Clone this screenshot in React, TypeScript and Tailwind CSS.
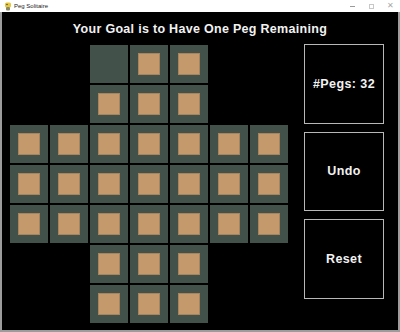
import React from "react";

const layout: number[][] = [
  [0, 0, 2, 1, 1, 0, 0],
  [0, 0, 1, 1, 1, 0, 0],
  [1, 1, 1, 1, 1, 1, 1],
  [1, 1, 1, 1, 1, 1, 1],
  [1, 1, 1, 1, 1, 1, 1],
  [0, 0, 1, 1, 1, 0, 0],
  [0, 0, 1, 1, 1, 0, 0],
];

function Cell({ v }: { v: number }) {
  if (v === 0) return <div className="w-[38px] h-[38px]" />;
  return (
    <div className="w-[38px] h-[38px] bg-[#42524a] flex items-center justify-center">
      {v === 1 && (
        <div className="w-[22px] h-[22px] bg-[#c49a6c] border border-[#a8845c]" />
      )}
    </div>
  );
}

function Box({ label, h }: { label: string; h: string }) {
  return (
    <div
      className={`w-[80px] ${h} border border-[#b8b8b8] flex items-center justify-center text-[12.5px] font-bold text-[#f2f2f2] tracking-[0.4px]`}
      style={{ fontFamily: '"Liberation Sans", Arial, sans-serif' }}
    >
      {label}
    </div>
  );
}

export default function App() {
  return (
    <div
      className="w-[400px] h-[332px] bg-[#9c9c9c] flex flex-col overflow-hidden"
      style={{ fontFamily: '"Liberation Sans", Arial, sans-serif' }}
    >
      <div className="h-[12px] bg-white flex items-center shrink-0">
        <svg width="8" height="9" viewBox="0 0 8 9" className="ml-[4px]">
          <rect x="1" y="0.5" width="6" height="5" rx="1.5" fill="#e8c83a" />
          <rect x="2" y="5" width="4" height="3.5" rx="1" fill="#8a8a6a" />
          <circle cx="3" cy="2.5" r="0.7" fill="#333" />
        </svg>
        <span className="ml-[2px] text-[6px] leading-none text-[#222]">Peg Solitaire</span>
        <div className="ml-auto flex items-center text-[#a8a8a8]">
          <div className="w-[5px] h-[1px] bg-[#9a9a9a] mr-[14px]" />
          <div className="w-[5px] h-[5px] border border-[#c8c8c8] mr-[13px]" />
          <span className="text-[8px] leading-none mr-[6px]">✕</span>
        </div>
      </div>
      <div className="flex-1 mx-[2px] mb-[2px] bg-black flex flex-col">
        <div className="h-[32px] flex items-center justify-center pt-[3px]">
          <span className="text-[12.5px] font-bold text-[#f2f2f2] tracking-[0.3px]">
            Your Goal is to Have One Peg Remaining
          </span>
        </div>
        <div className="flex">
          <div className="ml-[8px] mt-[1px] grid grid-cols-7 gap-[2px]">
            {layout.flatMap((row, r) =>
              row.map((v, c) => <Cell key={`${r}-${c}`} v={v} />)
            )}
          </div>
          <div className="ml-[16px] flex flex-col gap-[8px]">
            <Box label="#Pegs: 32" h="h-[80px]" />
            <Box label="Undo" h="h-[79px]" />
            <Box label="Reset" h="h-[80px]" />
          </div>
        </div>
      </div>
    </div>
  );
}
